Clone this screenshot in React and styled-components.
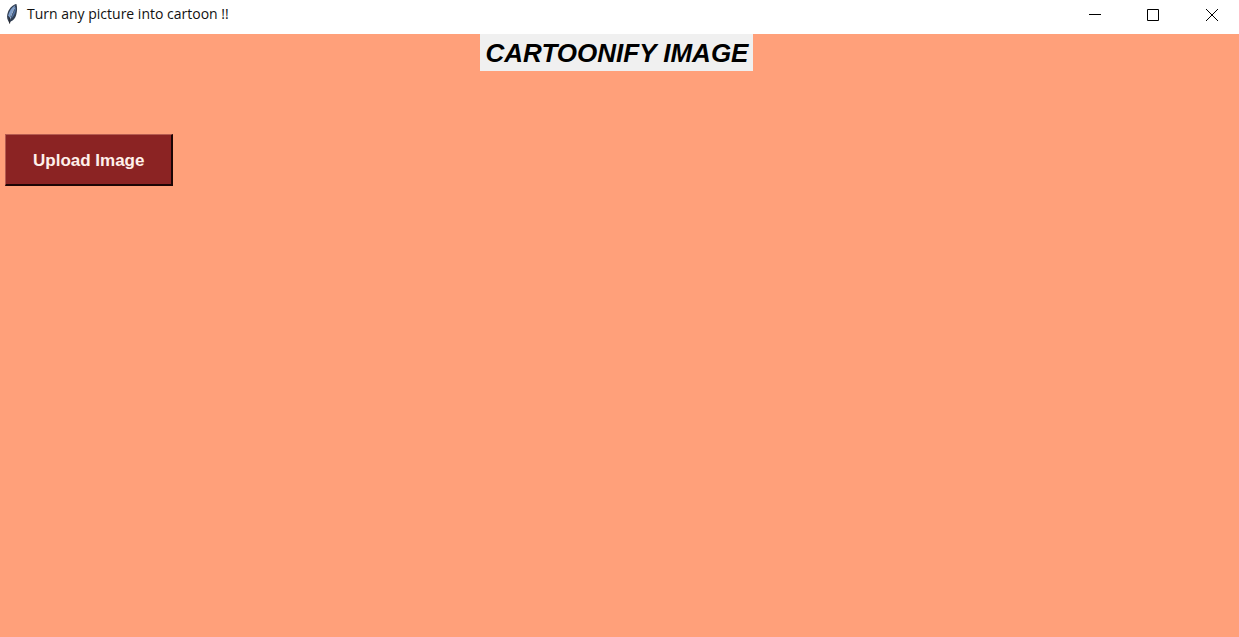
import React from 'react';
import styled, { createGlobalStyle } from 'styled-components';

const GlobalStyle = createGlobalStyle`
  *, *::before, *::after { box-sizing: border-box; }
  body { margin: 0; background: #ffa07a; }
`;

const Window = styled.div`
  display: flex;
  flex-direction: column;
  min-height: 100vh;
  background: #ffa07a;
`;

const TitleBar = styled.header`
  display: flex;
  align-items: flex-start;
  height: 34px;
  padding-left: 5px;
  background: #ffffff;
`;

const TitleGroup = styled.div`
  display: flex;
  flex: 1;
  align-items: center;
  gap: 7px;
  height: 28px;
`;

const WindowTitle = styled.span`
  font: 14px/20px "Open Sans", "Noto Sans", sans-serif;
  color: #111111;
  white-space: nowrap;
`;

const WindowControls = styled.div`
  display: flex;
  gap: 3px;
  height: 29px;
`;

const ControlButton = styled.button`
  display: flex;
  align-items: center;
  justify-content: center;
  width: 55px;
  padding: 0;
  border: 0;
  background: transparent;
  color: #000000;
`;

const Content = styled.main`
  display: flex;
  flex-direction: column;
  flex: 1;
  padding: 0 11px 0 5px;
`;

const Heading = styled.h1`
  align-self: center;
  margin: 0;
  padding: 1px 5px 0 6px;
  background: #f0f0f0;
  color: #000000;
  font: italic bold 26px/36px "Liberation Sans", Arial, sans-serif;
  white-space: nowrap;
`;

const UploadButton = styled.button`
  align-self: flex-start;
  margin: 63px 0 0;
  padding: 16px 27px 13px;
  border-style: solid;
  border-width: 1px 2px 2px 1px;
  border-color: #b65b50 #1c0505 #1c0505 #b65b50;
  background: #8b2323;
  color: #fff0ea;
  font: bold 17px/20px "Liberation Sans", Arial, sans-serif;
`;

function FeatherIcon() {
  return (
    <svg width="15" height="22" viewBox="0 0 15 22" aria-hidden="true">
      <path d="M11.4 1 C8 1.5 4.5 5 3 9 C1.8 12 1.7 15 3 17.5 L4.6 20.5 L5.7 18.5 C8.5 17.5 10.3 15 11.2 12 C12.3 8 12.4 4 11.4 1Z" fill="#303d51" />
      <path d="M10.4 2.3 C7 4 4.3 8 3.2 12.5 L4.6 14.5 C7 10.5 9 6.5 10.4 2.3Z" fill="#7f9fcb" />
      <path d="M11 3.5 C9.5 7 8 10.5 6 15.5 C9.5 13 11.4 8 11 3.5Z" fill="#4e6f9f" />
      <path d="M9.8 4.5 C7.8 8.5 6 12.5 4.9 16.5" fill="none" stroke="#9db4d2" strokeWidth="1" />
      <path d="M4.6 15 L4.6 20.5" stroke="#2b2b30" strokeWidth="1" />
    </svg>
  );
}

function ControlIcon({ path }) {
  return (
    <svg width="13" height="13" viewBox="0 0 13 13" fill="none" stroke="currentColor" aria-hidden="true">
      <path d={path} />
    </svg>
  );
}

const controls = [
  { label: 'Minimize', path: 'M0 6.5H12' },
  { label: 'Maximize', path: 'M0.5 1.5H11.5V12.5H0.5Z' },
  { label: 'Close', path: 'M1 1L13 13M13 1L1 13' },
];

export default function App() {
  return (
    <Window>
      <GlobalStyle />
      <TitleBar>
        <TitleGroup>
          <FeatherIcon />
          <WindowTitle>Turn any picture into cartoon !!</WindowTitle>
        </TitleGroup>
        <WindowControls>
          {controls.map(({ label, path }) => (
            <ControlButton key={label} type="button" aria-label={label}>
              <ControlIcon path={path} />
            </ControlButton>
          ))}
        </WindowControls>
      </TitleBar>
      <Content>
        <Heading>CARTOONIFY IMAGE</Heading>
        <UploadButton type="button">Upload Image</UploadButton>
      </Content>
    </Window>
  );
}
